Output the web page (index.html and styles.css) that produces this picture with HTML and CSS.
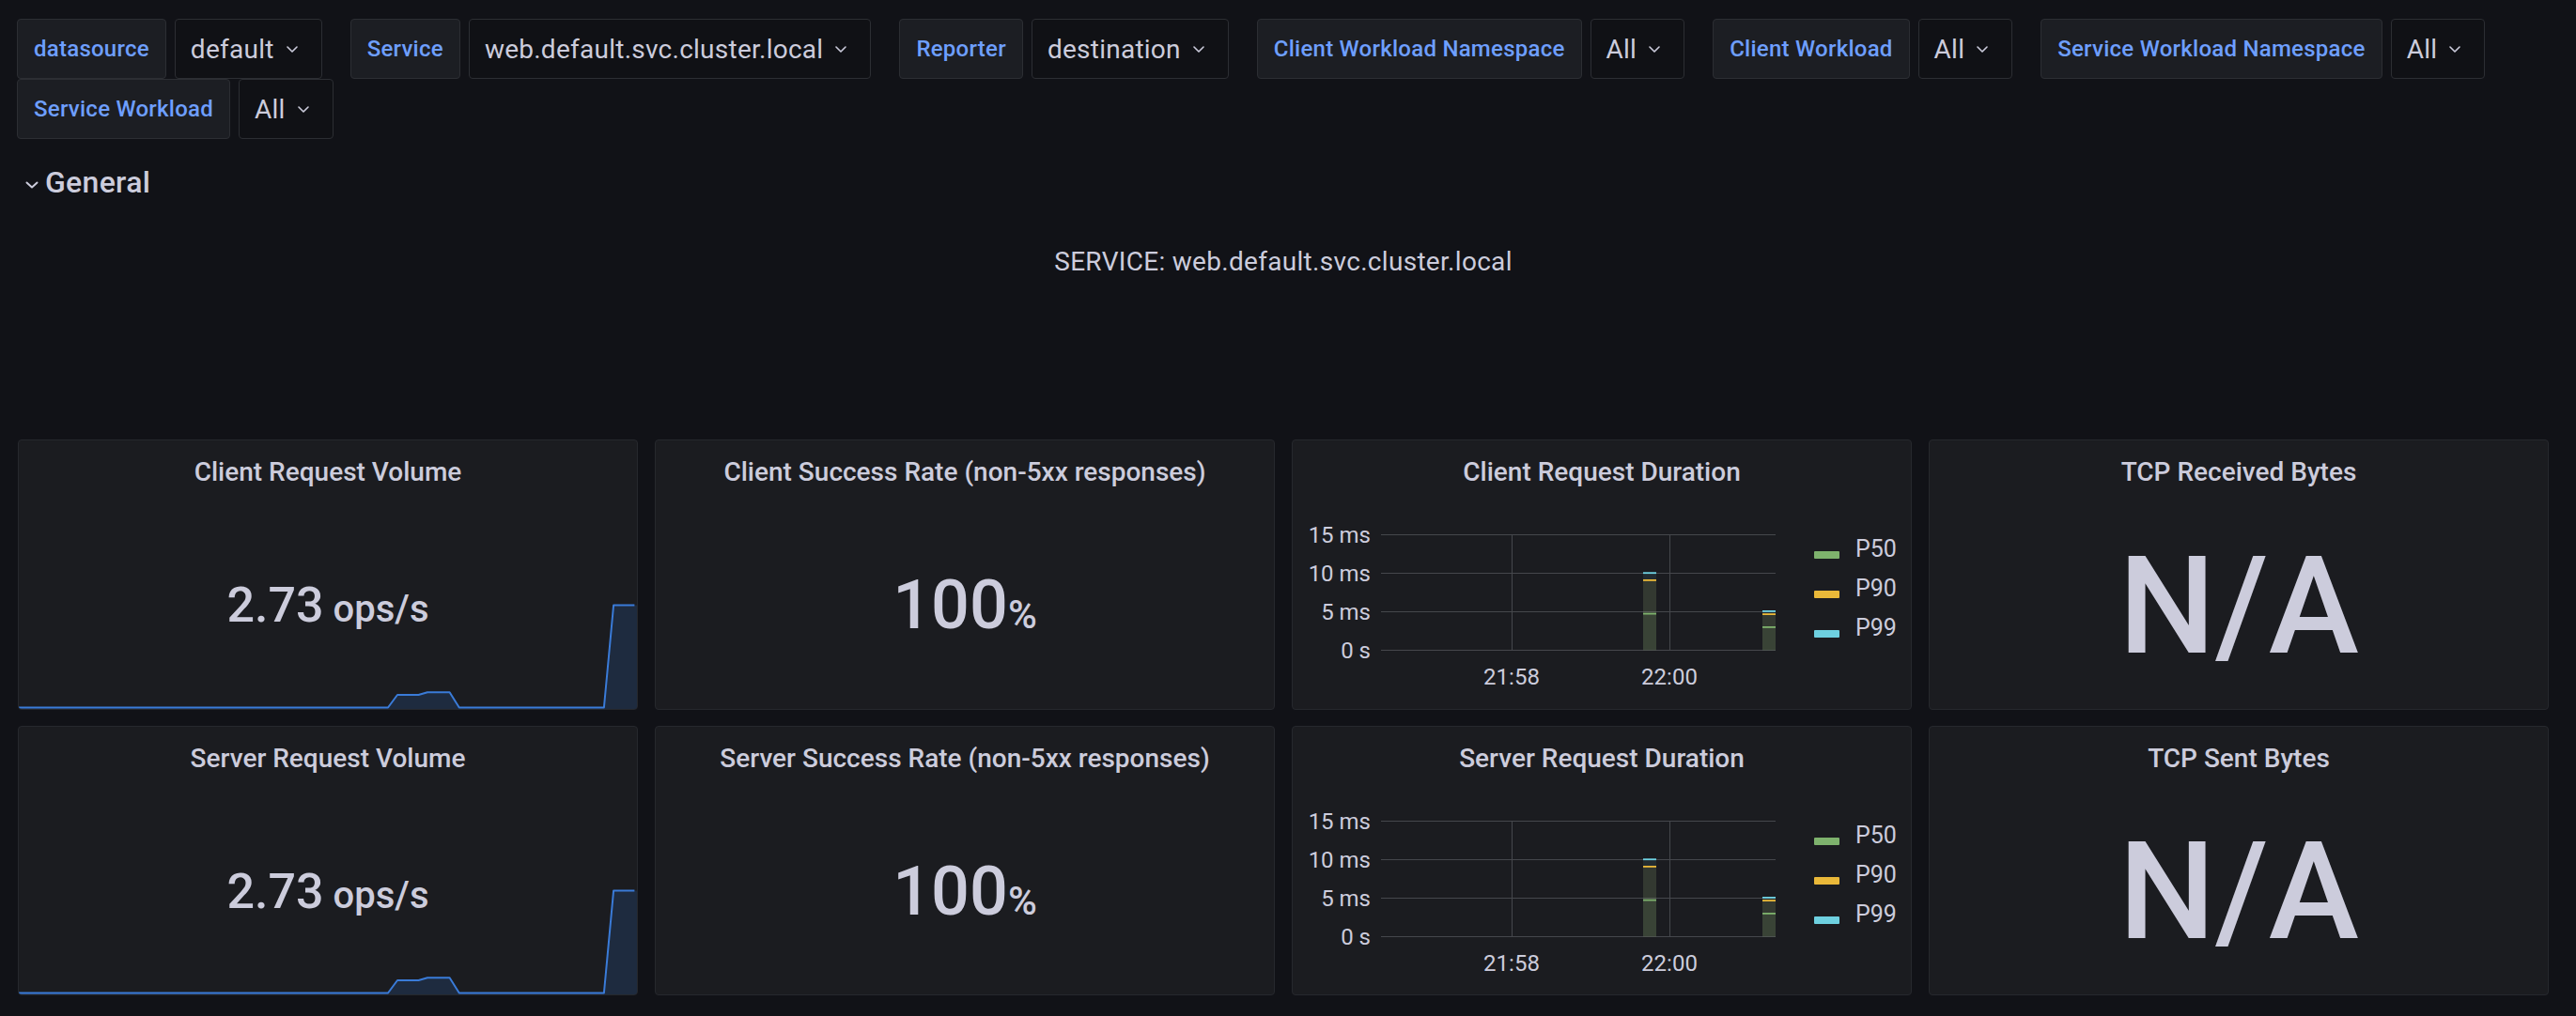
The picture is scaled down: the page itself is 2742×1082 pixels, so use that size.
FILE: index.html
```html
<!DOCTYPE html>
<html lang="en">
<head>
<meta charset="utf-8">
<title>Istio Service Dashboard</title>
<link rel="stylesheet" href="styles.css">
</head>
<body>
<div class="vars">
  <div class="var"><span class="var-label">datasource</span><span class="var-value">default<svg class="caret" viewBox="0 0 12 7"><polyline points="1,1 6,6 11,1"/></svg></span></div>
  <div class="var"><span class="var-label">Service</span><span class="var-value">web.default.svc.cluster.local<svg class="caret" viewBox="0 0 12 7"><polyline points="1,1 6,6 11,1"/></svg></span></div>
  <div class="var"><span class="var-label">Reporter</span><span class="var-value">destination<svg class="caret" viewBox="0 0 12 7"><polyline points="1,1 6,6 11,1"/></svg></span></div>
  <div class="var"><span class="var-label">Client Workload Namespace</span><span class="var-value">All<svg class="caret" viewBox="0 0 12 7"><polyline points="1,1 6,6 11,1"/></svg></span></div>
  <div class="var"><span class="var-label">Client Workload</span><span class="var-value">All<svg class="caret" viewBox="0 0 12 7"><polyline points="1,1 6,6 11,1"/></svg></span></div>
  <div class="var"><span class="var-label">Service Workload Namespace</span><span class="var-value">All<svg class="caret" viewBox="0 0 12 7"><polyline points="1,1 6,6 11,1"/></svg></span></div>
  <div class="var"><span class="var-label">Service Workload</span><span class="var-value">All<svg class="caret" viewBox="0 0 12 7"><polyline points="1,1 6,6 11,1"/></svg></span></div>
</div>

<div class="dash">
  <div class="row-header"><svg class="row-caret" viewBox="0 0 14 8"><polyline points="1.5,1.5 7,6.5 12.5,1.5"/></svg><span>General</span></div>
  <div class="text-panel">SERVICE: web.default.svc.cluster.local</div>

  <div class="grid">
    <section class="panel">
      <h2 class="panel-title">Client Request Volume</h2>
      <div class="panel-body stat">
        <svg class="spark" viewBox="0 0 658 112" preserveAspectRatio="none">
          <path class="spark-fill" d="M0,110.5 L393,110.5 L403,97 L425.5,97 L435,94.3 L458.6,94.3 L468.8,110.5 L622.9,110.5 L633.1,1.5 L658,1.5 L658,112 L0,112 Z"/>
          <path class="spark-line" d="M0,110.5 L393,110.5 L403,97 L425.5,97 L435,94.3 L458.6,94.3 L468.8,110.5 L622.9,110.5 L633.1,1.5 L655.4,1.5"/>
        </svg>
        <div class="stat-value small">2.73<span class="unit"> ops/s</span></div>
      </div>
    </section>

    <section class="panel">
      <h2 class="panel-title">Client Success Rate (non-5xx responses)</h2>
      <div class="panel-body stat">
        <div class="stat-value pct">100<span class="unit">%</span></div>
      </div>
    </section>

    <section class="panel">
      <h2 class="panel-title">Client Request Duration</h2>
      <div class="panel-body chart">
        <svg class="plot" viewBox="0 0 540 236">
          <g class="grid-lines">
            <line x1="94" y1="50.5" x2="514" y2="50.5"/>
            <line x1="94" y1="91.5" x2="514" y2="91.5"/>
            <line x1="94" y1="132.5" x2="514" y2="132.5"/>
            <line x1="94" y1="173.5" x2="514" y2="173.5"/>
            <line x1="233.5" y1="50" x2="233.5" y2="174"/>
            <line x1="401.5" y1="50" x2="401.5" y2="174"/>
          </g>
          <g class="axis">
            <text x="83" y="58.5" text-anchor="end">15 ms</text>
            <text x="83" y="99.5" text-anchor="end">10 ms</text>
            <text x="83" y="140.5" text-anchor="end">5 ms</text>
            <text x="83" y="181.5" text-anchor="end">0 s</text>
            <text x="233" y="210" text-anchor="middle">21:58</text>
            <text x="401" y="210" text-anchor="middle">22:00</text>
          </g>
          <g>
            <rect class="f-p99" x="373" y="90.3" width="14" height="83"/>
            <rect class="f-p90" x="373" y="98" width="14" height="75.5"/>
            <rect class="f-p50" x="373" y="133.7" width="14" height="39.8"/>
            <rect class="m-p99" x="373" y="90.3" width="14" height="1.8"/>
            <rect class="m-p90" x="373" y="98" width="14" height="1.8"/>
            <rect class="m-p50" x="373" y="133.7" width="14" height="1.8"/>
            <rect class="f-p99" x="500" y="131" width="14" height="42.5"/>
            <rect class="f-p90" x="500" y="134" width="14" height="39.5"/>
            <rect class="f-p50" x="500" y="148" width="14" height="25.5"/>
            <rect class="m-p99" x="500" y="131" width="14" height="1.8"/>
            <rect class="m-p90" x="500" y="134.2" width="14" height="1.8"/>
            <rect class="m-p50" x="500" y="148" width="14" height="1.8"/>
          </g>
        </svg>
        <ul class="legend">
          <li class="legend-item"><i class="swatch p50"></i>P50</li>
          <li class="legend-item"><i class="swatch p90"></i>P90</li>
          <li class="legend-item"><i class="swatch p99"></i>P99</li>
        </ul>
      </div>
    </section>

    <section class="panel">
      <h2 class="panel-title">TCP Received Bytes</h2>
      <div class="panel-body stat">
        <div class="stat-value na">N/A</div>
      </div>
    </section>

    <section class="panel">
      <h2 class="panel-title">Server Request Volume</h2>
      <div class="panel-body stat">
        <svg class="spark" viewBox="0 0 658 112" preserveAspectRatio="none">
          <path class="spark-fill" d="M0,110.5 L393,110.5 L403,97 L425.5,97 L435,94.3 L458.6,94.3 L468.8,110.5 L622.9,110.5 L633.1,1.5 L658,1.5 L658,112 L0,112 Z"/>
          <path class="spark-line" d="M0,110.5 L393,110.5 L403,97 L425.5,97 L435,94.3 L458.6,94.3 L468.8,110.5 L622.9,110.5 L633.1,1.5 L655.4,1.5"/>
        </svg>
        <div class="stat-value small">2.73<span class="unit"> ops/s</span></div>
      </div>
    </section>

    <section class="panel">
      <h2 class="panel-title">Server Success Rate (non-5xx responses)</h2>
      <div class="panel-body stat">
        <div class="stat-value pct">100<span class="unit">%</span></div>
      </div>
    </section>

    <section class="panel">
      <h2 class="panel-title">Server Request Duration</h2>
      <div class="panel-body chart">
        <svg class="plot" viewBox="0 0 540 236">
          <g class="grid-lines">
            <line x1="94" y1="50.5" x2="514" y2="50.5"/>
            <line x1="94" y1="91.5" x2="514" y2="91.5"/>
            <line x1="94" y1="132.5" x2="514" y2="132.5"/>
            <line x1="94" y1="173.5" x2="514" y2="173.5"/>
            <line x1="233.5" y1="50" x2="233.5" y2="174"/>
            <line x1="401.5" y1="50" x2="401.5" y2="174"/>
          </g>
          <g class="axis">
            <text x="83" y="58.5" text-anchor="end">15 ms</text>
            <text x="83" y="99.5" text-anchor="end">10 ms</text>
            <text x="83" y="140.5" text-anchor="end">5 ms</text>
            <text x="83" y="181.5" text-anchor="end">0 s</text>
            <text x="233" y="210" text-anchor="middle">21:58</text>
            <text x="401" y="210" text-anchor="middle">22:00</text>
          </g>
          <g>
            <rect class="f-p99" x="373" y="90.3" width="14" height="83"/>
            <rect class="f-p90" x="373" y="98" width="14" height="75.5"/>
            <rect class="f-p50" x="373" y="133.7" width="14" height="39.8"/>
            <rect class="m-p99" x="373" y="90.3" width="14" height="1.8"/>
            <rect class="m-p90" x="373" y="98" width="14" height="1.8"/>
            <rect class="m-p50" x="373" y="133.7" width="14" height="1.8"/>
            <rect class="f-p99" x="500" y="131" width="14" height="42.5"/>
            <rect class="f-p90" x="500" y="134" width="14" height="39.5"/>
            <rect class="f-p50" x="500" y="148" width="14" height="25.5"/>
            <rect class="m-p99" x="500" y="131" width="14" height="1.8"/>
            <rect class="m-p90" x="500" y="134.2" width="14" height="1.8"/>
            <rect class="m-p50" x="500" y="148" width="14" height="1.8"/>
          </g>
        </svg>
        <ul class="legend">
          <li class="legend-item"><i class="swatch p50"></i>P50</li>
          <li class="legend-item"><i class="swatch p90"></i>P90</li>
          <li class="legend-item"><i class="swatch p99"></i>P99</li>
        </ul>
      </div>
    </section>

    <section class="panel">
      <h2 class="panel-title">TCP Sent Bytes</h2>
      <div class="panel-body stat">
        <div class="stat-value na">N/A</div>
      </div>
    </section>
  </div>
</div>
</body>
</html>
```

FILE: styles.css
```css
* { box-sizing: border-box; }

html, body {
  margin: 0;
  padding: 0;
  background: #111217;
  color: #ccccdc;
  font-family: Roboto, "Liberation Sans", Arial, sans-serif;
}

body {
  width: 2742px;
  height: 1082px;
  overflow: hidden;
}

/* ---------- variables bar ---------- */
.vars {
  display: flex;
  flex-wrap: wrap;
  column-gap: 30px;
  row-gap: 0;
  padding: 20px 0 0 18px;
}

.var {
  display: flex;
  gap: 9px;
}

.var-label,
.var-value {
  height: 64px;
  display: flex;
  align-items: center;
  border: 1px solid #2c2e33;
  border-radius: 4px;
  white-space: nowrap;
}

.var-label {
  padding: 0 17px;
  background: #1c1e23;
  color: #6e9fff;
  font-size: 24px;
  font-weight: 500;
  letter-spacing: 0.25px;
}

.var-value {
  padding: 0 25px 0 16px;
  gap: 13px;
  background: #101115;
  color: #ccccdc;
  font-size: 28px;
  letter-spacing: 0.25px;
}

.caret {
  width: 12px;
  height: 7px;
  fill: none;
  stroke: #ccccdc;
  stroke-width: 1.6;
  stroke-linecap: round;
  stroke-linejoin: round;
}

/* ---------- dashboard ---------- */
.dash {
  padding: 0 29px 0 19px;
}

.row-header {
  display: flex;
  align-items: center;
  gap: 7px;
  margin-top: 26px;
  padding-left: 8px;
  height: 40px;
  font-size: 32px;
  font-weight: 500;
  line-height: 40px;
  letter-spacing: 0.3px;
  color: #ccccdc;
}

.row-caret {
  width: 14px;
  height: 8px;
  margin-top: 6px;
  fill: none;
  stroke: #ccccdc;
  stroke-width: 2;
  stroke-linecap: round;
  stroke-linejoin: round;
}

.text-panel {
  height: 238px;
  padding-top: 48px;
  text-align: center;
  font-size: 28px;
  line-height: 33px;
  letter-spacing: 0.3px;
  color: #ccccdc;
}

.grid {
  margin-top: 16px;
  display: grid;
  grid-template-columns: repeat(4, 660px);
  grid-template-rows: 288px 287px;
  column-gap: 18px;
  row-gap: 17px;
}

.panel {
  display: flex;
  flex-direction: column;
  background: #1b1c20;
  border: 1px solid #26282d;
  border-radius: 4px;
  overflow: hidden;
}

.panel-title {
  margin: 0;
  padding-top: 17px;
  height: 50px;
  text-align: center;
  font-size: 28px;
  font-weight: 500;
  line-height: 33px;
  color: #ccccdc;
  white-space: nowrap;
}

.panel-body {
  flex: 1;
  min-height: 0;
}

/* ---------- stat ---------- */
.stat {
  display: grid;
  grid-template: 1fr / 1fr;
  padding-top: 16px;
}

.stat > * {
  grid-area: 1 / 1;
}

.spark {
  align-self: end;
  width: 100%;
  height: 112px;
  display: block;
}

.spark-fill {
  fill: rgba(50, 116, 217, 0.17);
}

.spark-line {
  fill: none;
  stroke: #3a7bd8;
  stroke-width: 2;
  stroke-linejoin: round;
}

.stat-value {
  align-self: center;
  justify-self: center;
  line-height: 1;
  font-weight: 500;
  color: #ccccdc;
  white-space: pre;
  position: relative;
}

.stat-value.small { font-size: 52px; }
.stat-value.small .unit { font-size: 40px; }

.stat-value.pct { font-size: 72px; }
.stat-value.pct .unit { font-size: 42px; }

.stat-value.na { font-size: 145px; }

/* ---------- time series ---------- */
.chart {
  display: flex;
}

.plot {
  width: 540px;
  height: 236px;
  flex: none;
  display: block;
}

.grid-lines line {
  stroke: #45474c;
  stroke-width: 1;
}

.axis text {
  font-family: Roboto, "Liberation Sans", Arial, sans-serif;
  font-size: 24px;
  fill: #ccccdc;
}

.f-p50 { fill: rgba(126, 178, 109, 0.09); }
.f-p90 { fill: rgba(234, 184, 57, 0.09); }
.f-p99 { fill: rgba(110, 208, 224, 0.09); }
.m-p50 { fill: #7eb26d; }
.m-p90 { fill: #eab839; }
.m-p99 { fill: #6ed0e0; }

.legend {
  list-style: none;
  margin: 0 0 0 15px;
  padding: 44px 0 0 0;
  display: flex;
  flex-direction: column;
}

.legend-item {
  display: flex;
  align-items: center;
  gap: 17px;
  height: 42px;
  font-size: 25px;
  color: #ccccdc;
}

.swatch {
  display: block;
  width: 27px;
  height: 8px;
  margin-top: 14px;
  border-radius: 1px;
}

.swatch.p50 { background: #7eb26d; }
.swatch.p90 { background: #eab839; }
.swatch.p99 { background: #6ed0e0; }
```
